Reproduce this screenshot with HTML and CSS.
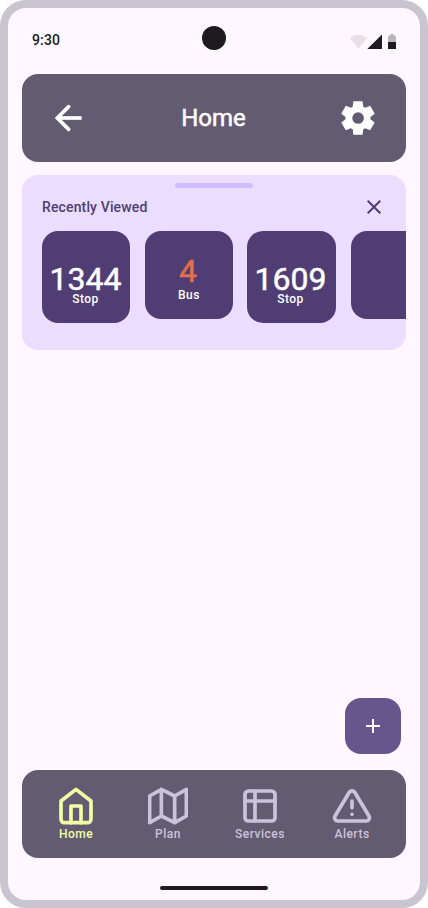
FILE: index.html
```html
<!DOCTYPE html>
<html lang="en">
<head>
<meta charset="utf-8">
<title>Home</title>
<link rel="stylesheet" href="styles.css">
</head>
<body>
<div class="phone">
  <div class="status">
    <span class="time">9:30</span>
    <span class="camera"></span>
    <svg class="indicators" width="46" height="16" viewBox="0 0 46 16">
      <path d="M8.500 14.500 0 4.200C5-.3 12-.3 17 4.200Z" fill="#1d1b20" fill-opacity=".1"/>
      <path d="M17.300 15 32 .5V15Z" fill="#1d1b20"/>
      <path d="M38 8V2.500Q38 1.700 38.800 1.700H40V1q0-1 1-1h2q1 0 1 1v.7h1.200q.8 0 .8.800V8Z" fill="#1d1b20" fill-opacity=".3"/>
      <path d="M38 8h8v6.500q0 .5-.5.500h-7q-.5 0-.5-.5Z" fill="#1d1b20"/>
    </svg>
  </div>
  <header class="appbar">
    <svg class="back" width="40" height="40" viewBox="0 0 24 24"><path d="M19 12H4.600"/><path class="head" d="M11.200 5.200 4.400 12l6.800 6.800"/></svg>
    <h1>Home</h1>
    <svg width="40" height="40" viewBox="0 0 24 24"><path fill="#fff" d="M9.25 22l-.4-3.2q-.325-.125-.612-.3t-.563-.375L4.7 19.375l-2.75-4.75 2.575-1.95Q4.5 12.500 4.500 12.338v-.675q0-.163.025-.338L1.950 9.375l2.750-4.750 2.975 1.250q.275-.2.575-.375t.6-.3l.4-3.200h5.500l.4 3.200q.325.125.613.300t.562.375l2.975-1.250 2.750 4.750-2.575 1.950q.025.175.025.338v.675q0 .162-.050.337l2.575 1.950-2.750 4.750-2.950-1.250q-.275.2-.575.375t-.6.300l-.4 3.200zm2.800-6.500q1.450 0 2.475-1.025T15.550 12t-1.025-2.475T12.050 8.500q-1.475 0-2.487 1.025T8.550 12t1.013 2.475T12.050 15.500"/></svg>
  </header>
  <section class="recent">
    <div class="handle"></div>
    <div class="recent-head">
      <h2>Recently Viewed</h2>
      <svg width="24" height="24" viewBox="0 0 24 24"><path fill="#4f3d74" d="M19 6.410 17.590 5 12 10.590 6.410 5 5 6.410 10.590 12 5 17.590 6.410 19 12 13.410 17.590 19 19 17.590 13.410 12z"/></svg>
    </div>
    <div class="tiles">
      <div class="tile stop"><b>1344</b><span>Stop</span></div>
      <div class="tile bus"><b>4</b><span>Bus</span></div>
      <div class="tile stop wide"><b>1609</b><span>Stop</span></div>
      <div class="tile"></div>
    </div>
  </section>
  <button class="fab" aria-label="Add"><svg width="24" height="24" viewBox="0 0 24 24"><path fill="#fff" d="M19 13h-6v6h-2v-6H5v-2h6V5h2v6h6z"/></svg></button>
  <nav class="tabs">
    <a class="active"><svg viewBox="0 0 24 24"><path d="M3 9l9-7 9 7v11a2 2 0 0 1-2 2H5a2 2 0 0 1-2-2z"/><path d="M9 22V12h6v10"/></svg>Home</a>
    <a><svg viewBox="0 0 24 24"><path d="M1 6v16l7-4 8 4 7-4V2l-7 4-8-4zM8 2v16M16 6v16"/></svg>Plan</a>
    <a><svg viewBox="0 0 24 24"><rect x="3" y="3" width="18" height="18" rx="2"/><path d="M3 9h18M9 3v18"/></svg>Services</a>
    <a><svg viewBox="0 0 24 24"><path d="M10.290 3.860 1.820 18a2 2 0 0 0 1.710 3h16.940a2 2 0 0 0 1.710-3L13.710 3.860a2 2 0 0 0-3.420 0zM12 9v4M12 17h.01"/></svg>Alerts</a>
  </nav>
  <div class="gesture"></div>
</div>
</body>
</html>
```
FILE: styles.css
```css
* { box-sizing: border-box; }
body { margin: 0; background: #fff; font-family: Roboto, sans-serif; }
h1, h2 { margin: 0; font-weight: 500; }
svg { display: block; flex: none; }

.phone {
  width: 428px;
  height: 908px;
  border: 8px solid #cac4d0;
  border-radius: 26px;
  background: #fef7ff;
  padding: 0 14px;
  display: flex;
  flex-direction: column;
}

.status {
  height: 66px;
  padding: 18px 10px 0;
  display: grid;
  grid-template-columns: 1fr 24px 1fr;
  align-items: start;
}
.time { font-size: 14px; line-height: 20px; font-weight: 500; letter-spacing: .14px; color: #1d1b20; padding-top: 4px; }
.camera { width: 24px; height: 24px; border-radius: 50%; background: #1d1b20; }
.indicators { justify-self: end; margin-top: 8px; }

.appbar {
  height: 88px;
  border-radius: 16px;
  background: #625b71;
  padding: 0 28px;
  display: flex;
  align-items: center;
  justify-content: space-between;
}
.appbar h1 { font-size: 24px; line-height: 32px; font-weight: 400; -webkit-text-stroke: .5px #fff; color: #fff; padding-right: 1px; }
.back path { fill: none; stroke: #fff; stroke-width: 2.2; }
.back .head { stroke-linecap: round; }

.recent {
  height: 175px;
  margin-top: 13px;
  border-radius: 16px;
  background: #eaddff;
  overflow: hidden;
  padding: 8px 0 0 20px;
}
.handle { width: 78px; height: 5px; border-radius: 3px; background: #d0bcff; margin-left: 133px; }
.recent-head {
  display: flex;
  align-items: center;
  justify-content: space-between;
  height: 24px;
  margin: 7px 20px 12px 0;
}
.recent-head h2 { font-size: 14px; line-height: 20px; letter-spacing: .14px; color: #4f3d74; }
.tiles { display: flex; gap: 15px; align-items: flex-start; }
.tile {
  flex: none;
  width: 88px;
  height: 88px;
  padding-right: 1px;
  border-radius: 16px;
  background: #4f3d74;
  color: #fff;
  display: flex;
  flex-direction: column;
  align-items: center;
}
.tile b { font-size: 32px; line-height: 32px; font-weight: 400; -webkit-text-stroke: .5px currentColor; }
.tile span { font-size: 12px; line-height: 16px; font-weight: 500; letter-spacing: .5px; }
.stop { height: 92px; padding-top: 32px; }
.stop span { margin-top: -4px; }
.wide { width: 89px; margin-left: -1px; padding-right: 2px; }
.bus { padding-top: 24px; }
.bus b { color: #e46f4b; padding-right: 1px; }
.bus span { padding-left: 1px; }

.fab {
  width: 56px;
  height: 56px;
  margin: auto 5px 16px auto;
  border: 0;
  padding: 0;
  border-radius: 16px;
  background: #67558e;
  display: flex;
  align-items: center;
  justify-content: center;
}

.tabs {
  height: 88px;
  border-radius: 16px;
  background: #625b71;
  padding: 16px 8px 0;
  display: grid;
  grid-template-columns: repeat(4, 1fr);
}
.tabs a {
  display: flex;
  flex-direction: column;
  align-items: center;
  color: #ccc2dc;
  font-size: 12px;
  line-height: 16px;
  font-weight: 500;
  letter-spacing: .5px;
}
.tabs svg {
  width: 40px;
  height: 40px;
  fill: none;
  stroke: currentColor;
  stroke-width: 2.2;
  stroke-linecap: round;
  stroke-linejoin: round;
}
.tabs .active { color: #f1ffa4; }

.gesture { width: 108px; height: 4px; border-radius: 2px; background: #1d1b20; margin: 28px auto 10px; flex: none; }
```
